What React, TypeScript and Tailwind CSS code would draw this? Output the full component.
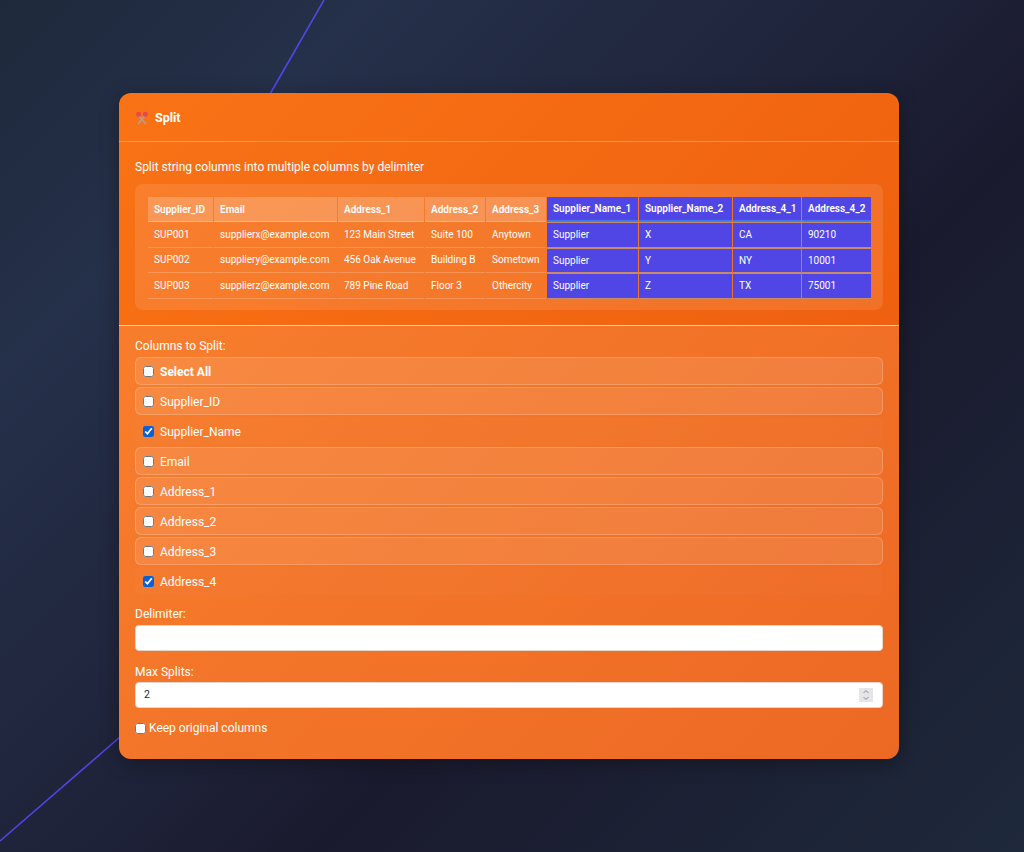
import React from "react";

const columns = ["Supplier_ID", "Email", "Address_1", "Address_2", "Address_3"];
const newColumns = ["Supplier_Name_1", "Supplier_Name_2", "Address_4_1", "Address_4_2"];

const rows = [
  ["SUP001", "supplierx@example.com", "123 Main Street", "Suite 100", "Anytown", "Supplier", "X", "CA", "90210"],
  ["SUP002", "suppliery@example.com", "456 Oak Avenue", "Building B", "Sometown", "Supplier", "Y", "NY", "10001"],
  ["SUP003", "supplierz@example.com", "789 Pine Road", "Floor 3", "Othercity", "Supplier", "Z", "TX", "75001"],
];

const widths = [65, 123, 86, 60, 60, 91, 93, 68, 69];

const options = [
  { label: "Select All", bold: true, checked: false },
  { label: "Supplier_ID", checked: false },
  { label: "Supplier_Name", checked: true },
  { label: "Email", checked: false },
  { label: "Address_1", checked: false },
  { label: "Address_2", checked: false },
  { label: "Address_3", checked: false },
  { label: "Address_4", checked: true },
];

const Scissors = () => (
  <svg width="14" height="14" viewBox="0 0 14 14" className="shrink-0">
    <path d="M3.5 4 L11 13 M10.5 4 L3 13" stroke="#b0a09a" strokeWidth="1.5" fill="none" />
    <circle cx="3.6" cy="3.2" r="2.5" fill="#e8474c" />
    <circle cx="10.4" cy="3.2" r="2.5" fill="#e8474c" />
  </svg>
);

export default function App() {
  return (
    <div className="relative min-h-[852px] overflow-hidden bg-[linear-gradient(135deg,#1e293b_0%,#25304a_20%,#1e2238_50%,#1a1a2e_62%,#1e293b_100%)] font-['Roboto',sans-serif] text-white">
      <svg className="absolute inset-0" width="1024" height="852">
        <line x1="324" y1="0" x2="270" y2="94" stroke="#4f46e5" strokeWidth="1.6" />
        <line x1="0" y1="841" x2="120" y2="737" stroke="#4f46e5" strokeWidth="1.6" />
      </svg>

      <div className="relative pt-[93px] pl-[119px]">
        <div className="h-[666px] w-[780px] overflow-hidden rounded-xl bg-[linear-gradient(135deg,#f97316_0%,#ea580c_100%)] shadow-[0_4px_20px_rgba(0,0,0,0.3)]">
          <div className="flex h-[49px] items-center gap-[6px] border-b border-white/30 px-4 pt-[2px]">
            <Scissors />
            <span className="pt-px text-[12.5px] font-bold">Split</span>
          </div>

          <div className="flex h-[184px] flex-col border-b border-white/70 px-4 pt-4">
            <p className="text-[12px] leading-[18px]">Split string columns into multiple columns by delimiter</p>
            <div className="mt-2 h-[126px] rounded-lg bg-white/10 px-3 pt-[13px]">
              <table className="w-[725px] table-fixed border-separate border-spacing-x-px border-spacing-y-0 text-[10px]">
                <colgroup>
                  {widths.map((w, i) => (
                    <col key={i} style={{ width: w }} />
                  ))}
                </colgroup>
                <thead>
                  <tr>
                    {columns.map((c) => (
                      <th key={c} className="h-[25px] border-b border-white/30 bg-white/20 px-[6px] text-left font-semibold whitespace-nowrap">
                        {c}
                      </th>
                    ))}
                    {newColumns.map((c) => (
                      <th key={c} className="h-[25px] border-b-2 border-[#3f7cf0] bg-[#4f46e5] px-[6px] text-left font-semibold whitespace-nowrap">
                        {c}
                      </th>
                    ))}
                  </tr>
                </thead>
                <tbody>
                  {rows.map((row) => (
                    <tr key={row[0]}>
                      {row.map((cell, i) => (
                        <td
                          key={i}
                          className={
                            i > 4
                              ? "h-[25.5px] border-y border-[#c98a6a] bg-[#4f46e5] px-[6px] whitespace-nowrap"
                              : "h-[25.5px] border-b border-white/20 px-[6px] whitespace-nowrap"
                          }
                        >
                          {cell}
                        </td>
                      ))}
                    </tr>
                  ))}
                </tbody>
              </table>
            </div>
          </div>

          <div className="h-full bg-white/10 px-4 pt-[11px]">
            <label className="block text-[12px] leading-[18px]">Columns to Split:</label>
            <div className="mt-[2px] flex flex-col gap-[2px]">
              {options.map((o) => (
                <label
                  key={o.label}
                  className={
                    o.checked
                      ? "flex h-[28px] items-center gap-[6px] rounded-md border border-transparent bg-white/[0.02] px-[7px] text-[12px]"
                      : "flex h-[28px] items-center gap-[6px] rounded-md border border-white/20 bg-white/10 px-[7px] text-[12px]"
                  }
                >
                  <input type="checkbox" defaultChecked={o.checked} className="m-0 h-[11px] w-[11px] accent-[#0f5fd0]" />
                  <span className={o.bold ? "pt-[2px] font-bold" : "pt-[2px]"}>{o.label}</span>
                </label>
              ))}
            </div>

            <label className="mt-[10px] block text-[12px] leading-[18px]">Delimiter:</label>
            <input type="text" className="mt-[2px] block h-[26px] w-full rounded border border-[#e5d5cc] bg-white px-2 text-[11px] text-gray-800" />

            <label className="mt-[12px] block text-[12px] leading-[18px]">Max Splits:</label>
            <div className="relative mt-px">
              <div className="flex h-[26px] w-full items-center rounded border border-[#e5d5cc] bg-white px-2 text-[10.5px] text-gray-800">2</div>
              <svg className="absolute top-[6px] right-[10px]" width="14" height="14" viewBox="0 0 14 14">
                <rect width="14" height="14" fill="#e6e6ea" />
                <path d="M4.5 5 L7 2.5 L9.5 5 M4.5 9 L7 11.5 L9.5 9" fill="none" stroke="#8c8c94" strokeWidth="1" />
              </svg>
            </div>

            <label className="mt-[11px] flex items-center gap-[3px] text-[12px] leading-[18px]">
              <input type="checkbox" className="m-0 h-[11px] w-[11px]" />
              Keep original columns
            </label>
          </div>
        </div>
      </div>
    </div>
  );
}
